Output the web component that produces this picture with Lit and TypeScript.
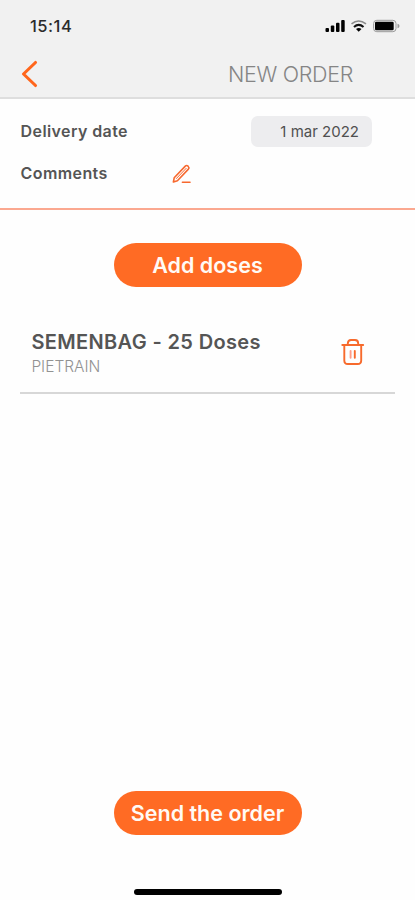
import { LitElement, html, css } from "lit";
import { customElement } from "lit/decorators.js";

@customElement("app-root")
export class AppRoot extends LitElement {
  static styles = css`
    :host {
      display: flex;
      flex-direction: column;
      box-sizing: border-box;
      width: 415px;
      height: 900px;
      overflow: hidden;
      background: #fefefe;
      color: #555;
      font-family: Inter, "Liberation Sans", sans-serif;
      white-space: nowrap;
    }
    svg { display: block; flex: none; }
    .header {
      box-sizing: border-box;
      height: 99px;
      background: #f1f1f1;
      border-bottom: 2px solid #dedede;
    }
    .status {
      display: flex;
      align-items: center;
      justify-content: space-between;
      height: 52px;
      padding: 0 15px 0 30px;
    }
    .time { font-size: 16.5px; font-weight: 500; color: #2b2b2b; letter-spacing: 0.5px; }
    .nav {
      display: flex;
      align-items: center;
      justify-content: space-between;
      height: 44px;
      padding: 0 62px 0 20px;
    }
    .title { font-size: 21.5px; font-weight: 300; color: #858585; letter-spacing: -0.3px; }
    .details {
      box-sizing: border-box;
      height: 111px;
      padding: 15px 43px 0 20.6px;
      border-bottom: 2px solid #fba890;
    }
    .row { display: flex; align-items: center; height: 34px; }
    .row + .row { margin-top: 8px; }
    .label { font-size: 16px; font-weight: 600; width: 150px; letter-spacing: 0.4px; }
    .date {
      box-sizing: border-box;
      margin-left: auto;
      width: 121px;
      height: 31px;
      line-height: 31px;
      padding-right: 13px;
      border-radius: 7px;
      background: #ededef;
      text-align: right;
      font-size: 15px;
      color: #505050;
    }
    .body {
      flex: 1;
      display: flex;
      flex-direction: column;
      align-items: center;
      padding: 33px 20px 5px;
    }
    .button {
      width: 188px;
      height: 44px;
      border: 0;
      border-radius: 22px;
      padding: 0;
      background: #ff6b24;
      color: #fffaf5;
      font: 600 21.5px/44px Inter, "Liberation Sans", sans-serif;
      white-space: nowrap;
      text-align: center;
    }
    .item {
      box-sizing: border-box;
      display: flex;
      align-items: center;
      justify-content: space-between;
      align-self: stretch;
      height: 84px;
      margin-top: 23px;
      padding: 2px 30px 0 11.4px;
      border-bottom: 2px solid #d7d7d7;
    }
    .text { padding-top: 4px; }
    .name { font-size: 20px; line-height: 26px; font-weight: 600; letter-spacing: 0.36px; }
    .breed { font-size: 15.5px; line-height: 24px; font-weight: 300; color: #929292; }
    .send { margin-top: auto; }
    .home { width: 148px; height: 6px; border-radius: 3px; background: #000; margin-top: 54px; }
  `;

  render() {
    return html`
      <header class="header">
        <div class="status">
          <span class="time">15:14</span>
          <svg width="75" height="14" viewBox="0 0 75 14">
            <rect x="0.5" y="9" width="3.5" height="4" rx="1" />
            <rect x="5.8" y="6.5" width="3.5" height="6.5" rx="1" />
            <rect x="11" y="3.7" width="3.5" height="9.3" rx="1" />
            <rect x="16.2" y="1" width="3.5" height="12" rx="1" />
            <g fill="none">
              <path d="M26.5 4.8Q33.5-.8 41 4.8" stroke="#8a8a8a" stroke-width="1.6" />
              <path d="M29 8Q33.7 3.8 38.5 8" stroke="#111" stroke-width="2.1" />
            </g>
            <path d="M31 10Q33.7 8 36.5 10L33.7 12.8Z" />
            <rect x="48.6" y="1.3" width="22.4" height="11.4" rx="3.2" fill="none" stroke="#999" />
            <rect x="50" y="2.8" width="18.7" height="8.4" rx="1.3" />
            <path d="M72.5 4.7Q74.5 5.2 74.5 7T72.5 9.3Z" fill="#999" />
          </svg>
        </div>
        <div class="nav">
          <svg width="18" height="28" viewBox="0 0 18 28">
            <path d="M15.5 2.5L3.5 14L15.5 25.5" fill="none" stroke="#ff661c" stroke-width="3.1" stroke-linecap="round" stroke-linejoin="round" />
          </svg>
          <span class="title">NEW ORDER</span>
        </div>
      </header>
      <section class="details">
        <div class="row">
          <span class="label">Delivery date</span>
          <span class="date">1 mar 2022</span>
        </div>
        <div class="row">
          <span class="label">Comments</span>
          <svg width="22" height="22" viewBox="0 -2 22 22" fill="none" stroke="#f7682e" stroke-width="1.6" stroke-linecap="round" stroke-linejoin="round">
            <path d="M2.4 18L3.2 13.8L14.3 2.1Q15.6.9 17.1 2.2Q18.6 3.7 17.4 5.1L6.4 16.7Z" />
            <path d="M5.4 14.5L15.2 4.3" stroke-width="1" />
            <path d="M11.4 18.3H19" />
          </svg>
        </div>
      </section>
      <main class="body">
        <button class="button">Add doses</button>
        <div class="item">
          <div class="text">
            <div class="name">SEMENBAG - 25 Doses</div>
            <div class="breed">PIETRAIN</div>
          </div>
          <svg width="24" height="28" viewBox="0 0 24 28" fill="none" stroke="#f76a2c" stroke-width="1.9" stroke-linecap="round" stroke-linejoin="round">
            <path d="M1.3 7H22.2" />
            <path d="M6.8 7V5.5Q6.8 2 10 2H14Q17.2 2 17.2 5.5V7" />
            <path d="M3.3 7V22.5Q3.3 26 6.8 26H16.7Q20.2 26 20.2 22.5V7" />
            <path d="M9.6 13V19.8" stroke="#ff9c88" />
            <path d="M13.8 13V19.8" />
          </svg>
        </div>
        <button class="button send">Send the order</button>
        <div class="home"></div>
      </main>
    `;
  }
}
